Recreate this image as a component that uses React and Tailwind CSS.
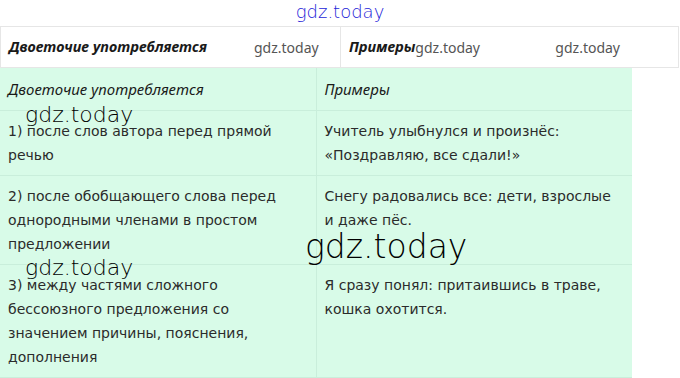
const rows = [
  {
    rule: '1) после слов автора перед прямой речью',
    example: 'Учитель улыбнулся и произнёс: «Поздравляю, все сдали!»',
  },
  {
    rule: '2) после обобщающего слова перед однородными членами в простом предложении',
    example: 'Снегу радовались все: дети, взрослые и даже пёс.',
  },
  {
    rule: '3) между частями сложного бессоюзного предложения со значением причины, пояснения, дополнения',
    example: 'Я сразу понял: притаившись в траве, кошка охотится.',
  },
];

function Mark({ className = '' }) {
  return (
    <span
      className={`absolute leading-none text-black pointer-events-none ${className}`}
      style={{ fontFamily: '"DejaVu Sans", sans-serif', fontWeight: 200 }}
    >
      gdz.today
    </span>
  );
}

export default function App() {
  return (
    <div
      className="relative w-[680px] h-[378px] overflow-hidden bg-white text-[#2b2b2b]"
      style={{ fontFamily: '"Noto Sans", sans-serif' }}
    >
      <div className="h-[26px] flex items-start justify-center pt-[2px]">
        <span
          className="text-[18px] leading-[20px] text-[#2424d8]"
          style={{ fontFamily: '"DejaVu Sans", sans-serif', fontWeight: 200 }}
        >
          gdz.today
        </span>
      </div>

      <div className="flex h-[42px] border border-[#e6e6e6] mr-[1px]">
        <div className="w-[340px] flex items-center px-2 border-r border-[#e6e6e6]">
          <span className="text-[14.5px] font-bold italic text-[#1a1a1a] w-[245px]">Двоеточие употребляется</span>
          <span className="text-[14px] text-[#555]">gdz.today</span>
        </div>
        <div className="flex-1 flex items-center px-2">
          <span className="text-[14.5px] font-bold italic text-[#1a1a1a]">Примеры</span>
          <span className="text-[14px] text-[#555] w-[140px]">gdz.today</span>
          <span className="text-[14px] text-[#555]">gdz.today</span>
        </div>
      </div>

      <table
        className="w-[632px] table-fixed border-collapse bg-[#d8fbe8] text-[14px] leading-[24px]"
        style={{ fontFamily: '"DejaVu Sans", sans-serif' }}
      >
        <thead>
          <tr className="h-[42px] border-b border-[#c9eedb]">
            <th
              className="w-[316px] px-2 text-left font-normal italic text-[15px] text-[#1a1a1a] border-r border-[#c9eedb]"
              style={{ fontFamily: '"Noto Sans", sans-serif' }}
            >
              Двоеточие употребляется
            </th>
            <th
              className="px-2 text-left font-normal italic text-[15px] text-[#1a1a1a]"
              style={{ fontFamily: '"Noto Sans", sans-serif' }}
            >
              Примеры
            </th>
          </tr>
        </thead>
        <tbody>
          {rows.map((r, i) => (
            <tr key={i} className="border-b border-[#c9eedb]">
              <td className="px-2 py-2 align-top border-r border-[#c9eedb]">{r.rule}</td>
              <td className="px-2 py-2 align-top">{r.example}</td>
            </tr>
          ))}
        </tbody>
      </table>

      <Mark className="left-[25px] top-[104px] text-[22px]" />
      <Mark className="left-[25px] top-[257px] text-[22px]" />
      <Mark className="left-[305px] top-[230px] text-[33px]" />
    </div>
  );
}
